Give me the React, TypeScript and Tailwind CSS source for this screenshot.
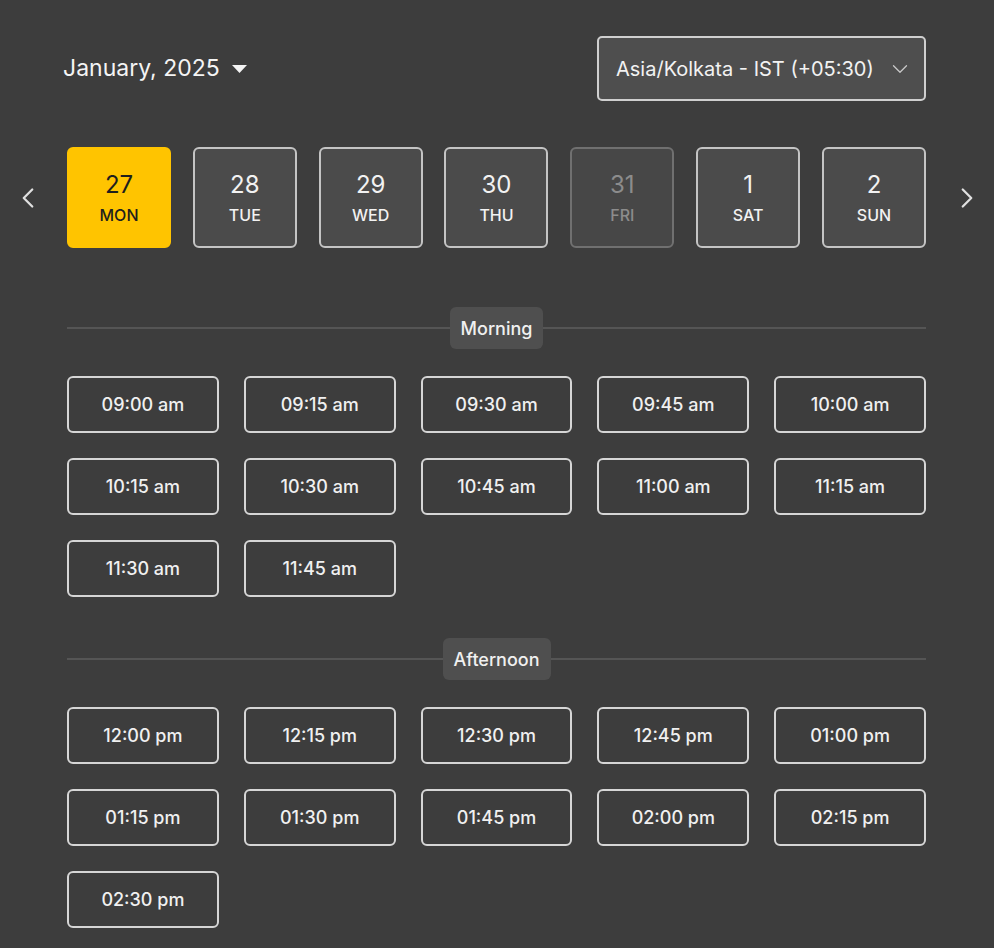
import { ChevronDown, ChevronLeft, ChevronRight } from "lucide-react";

const days = [
  { date: "27", day: "MON", state: "selected" },
  { date: "28", day: "TUE", state: "open" },
  { date: "29", day: "WED", state: "open" },
  { date: "30", day: "THU", state: "open" },
  { date: "31", day: "FRI", state: "disabled" },
  { date: "1", day: "SAT", state: "open" },
  { date: "2", day: "SUN", state: "open" },
];

const morning = [
  "09:00 am",
  "09:15 am",
  "09:30 am",
  "09:45 am",
  "10:00 am",
  "10:15 am",
  "10:30 am",
  "10:45 am",
  "11:00 am",
  "11:15 am",
  "11:30 am",
  "11:45 am",
];

const afternoon = [
  "12:00 pm",
  "12:15 pm",
  "12:30 pm",
  "12:45 pm",
  "01:00 pm",
  "01:15 pm",
  "01:30 pm",
  "01:45 pm",
  "02:00 pm",
  "02:15 pm",
  "02:30 pm",
];

function dayClass(state: string) {
  if (state === "selected") return "border-[#ffc400] bg-[#ffc400] text-[#1e1e1e]";
  if (state === "disabled") return "border-[#707070] bg-[#474747] text-[#8c8c8c]";
  return "border-[#c4c4c4] bg-[#4b4b4b] text-[#f2f2f2]";
}

function Section({ label, slots }: { label: string; slots: string[] }) {
  return (
    <section>
      <div className="flex items-center">
        <div className="h-[1.5px] flex-1 bg-[#555555]" />
        <span className="flex h-[42px] items-center rounded-md bg-[#4f4f4f] px-[11px] text-[18px] font-medium text-[#f0f0f0]">
          {label}
        </span>
        <div className="h-[1.5px] flex-1 bg-[#555555]" />
      </div>
      <div className="mt-[27px] grid grid-cols-5 gap-x-[25px] gap-y-[25px]">
        {slots.map((slot) => (
          <button
            key={slot}
            className="flex h-[57px] items-center justify-center rounded-md border-2 border-[#d6d6d6] text-[18px] font-medium text-[#f0f0f0]"
          >
            {slot}
          </button>
        ))}
      </div>
    </section>
  );
}

export default function App() {
  return (
    <main
      className="min-h-screen bg-[#3d3d3d] pb-[20px] pt-[36px] text-white"
      style={{ fontFamily: "Inter, 'Noto Sans', sans-serif" }}
    >
      <header className="flex items-center justify-between pl-[63px] pr-[68px]">
        <button className="flex items-center gap-[12px] text-[23px] text-[#f4f4f4]">
          January, 2025
          <svg width="15" height="8" viewBox="0 0 15 8" fill="#f4f4f4">
            <path d="M0 0h15L7.5 8z" />
          </svg>
        </button>
        <button className="flex h-[65px] w-[329px] items-center justify-between rounded-[5px] border-2 border-[#cfcfcf] bg-[#4e4e4e] pl-[17px] pr-[11px] text-[20px] text-[#f2f2f2]">
          Asia/Kolkata - IST (+05:30)
          <ChevronDown className="size-[26px] text-[#c8c8c8]" strokeWidth={1.2} />
        </button>
      </header>

      <div className="mt-[46px] flex items-center">
        <button className="flex w-[67px] items-center pl-[11px] text-[#e0e0e0]">
          <ChevronLeft className="size-[34px]" strokeWidth={1.6} />
        </button>
        <div className="flex flex-1 justify-between">
          {days.map((d) => (
            <button
              key={d.date}
              className={`flex h-[101px] w-[104px] flex-col items-center justify-center gap-[8px] rounded-md border-2 ${dayClass(d.state)}`}
            >
              <span className="text-[24px] leading-[26px]">{d.date}</span>
              <span className="text-[16px] font-medium leading-[18px]">{d.day}</span>
            </button>
          ))}
        </div>
        <button className="flex w-[68px] items-center justify-end pr-[10px] text-[#e0e0e0]">
          <ChevronRight className="size-[34px]" strokeWidth={1.6} />
        </button>
      </div>

      <div className="mt-[59px] pl-[67px] pr-[68px]">
        <Section label="Morning" slots={morning} />
        <div className="mt-[41px]">
          <Section label="Afternoon" slots={afternoon} />
        </div>
      </div>
    </main>
  );
}
